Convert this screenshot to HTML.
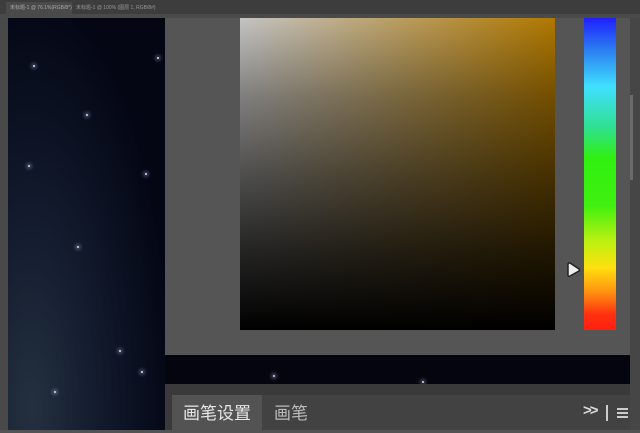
<!DOCTYPE html>
<html><head><meta charset="utf-8"><style>
body{margin:0;width:640px;height:430px;overflow:hidden;background:#535353;position:relative;font-family:"Liberation Sans","Noto Sans CJK SC",sans-serif}
div{position:absolute}
.star{width:2px;height:2px;border-radius:50%;background:#dde;box-shadow:0 0 3px 2px rgba(200,210,255,.3)}
</style></head><body>
<div style="left:0;top:0;width:640px;height:14px;background:#3d3d3d"></div>
<div style="left:6px;top:2px;width:62px;height:12px;background:#4a4a4a;color:#aaa;font-size:5px;line-height:12px;padding-left:4px">未标题-1 @ 76.1%(RGB/8*) ×</div>
<div style="left:76px;top:2px;width:80px;height:12px;color:#999;font-size:5px;line-height:12px">未标题-1 @ 100% (图层 1, RGB/8#) ×</div>
<div style="left:0;top:14px;width:640px;height:4px;background:#4a4a4a"></div>
<div style="left:0;top:18px;width:8px;height:412px;background:#494949"></div>
<div style="left:8px;top:18px;width:157px;height:412px;background:radial-gradient(ellipse at 15% 95%,#243040 0%,#10182a 40%,#040614 75%)"></div>
<div class="star" style="left:33px;top:65px"></div>
<div class="star" style="left:86px;top:114px"></div>
<div class="star" style="left:157px;top:57px"></div>
<div class="star" style="left:145px;top:173px"></div>
<div class="star" style="left:77px;top:246px"></div>
<div class="star" style="left:28px;top:165px"></div>
<div class="star" style="left:54px;top:391px"></div>
<div class="star" style="left:119px;top:350px"></div>
<div class="star" style="left:141px;top:371px"></div>
<div style="left:165px;top:18px;width:465px;height:337px;background:#555"></div>
<div style="left:240px;top:18px;width:315px;height:312px;background:linear-gradient(to bottom,rgba(0,0,0,0) 0%,rgba(0,0,0,.35) 25%,rgba(0,0,0,.6) 50%,rgba(0,0,0,.82) 75%,#000 100%),linear-gradient(to right,#c4c4c4,#b07800)"></div>
<div style="left:584px;top:18px;width:32px;height:312px;background:linear-gradient(to bottom,#2020ff 0%,#2a7cf0 10%,#40e0ff 22%,#30e090 35%,#30f010 45%,#40f010 60%,#c0f010 72%,#ffe010 80%,#ff9010 88%,#ff3010 95%,#ff2010 100%)"></div>
<svg style="position:absolute;left:566px;top:261px" width="16" height="18"><path d="M3 2 Q2 2 2 4 L2 14 Q2 16 4 15 L13 10 Q14 9 13 8 L4 2 Z" fill="#eee" stroke="#222" stroke-width="1.5" stroke-linejoin="round"/></svg>
<div style="left:630px;top:18px;width:10px;height:412px;background:#464646"></div>
<div style="left:630px;top:95px;width:3px;height:85px;background:#6a6a6a"></div>
<div style="left:165px;top:355px;width:465px;height:29px;background:#05050f"></div>
<div class="star" style="left:273px;top:375px"></div>
<div class="star" style="left:422px;top:381px"></div>
<div style="left:165px;top:384px;width:465px;height:46px;background:#3a3a3a"></div>
<div style="left:172px;top:395px;width:458px;height:35px;background:#424242"></div>
<div style="left:172px;top:395px;width:90px;height:35px;background:#535353;color:#e8e8e8;font-size:17px;line-height:38px;text-align:center">画笔设置</div>
<div style="left:262px;top:395px;width:58px;height:35px;color:#bbb;font-size:17px;line-height:38px;text-align:center">画笔</div>
<div style="left:583px;top:402px;color:#ddd;font-size:15px;font-weight:bold;letter-spacing:-2px">&gt;&gt;</div>
<div style="left:606px;top:405px;width:2px;height:16px;background:#ccc"></div>
<div style="left:617px;top:408px;width:11px;height:2px;background:#ccc;box-shadow:0 4px 0 #ccc,0 8px 0 #ccc"></div>
</body></html>
